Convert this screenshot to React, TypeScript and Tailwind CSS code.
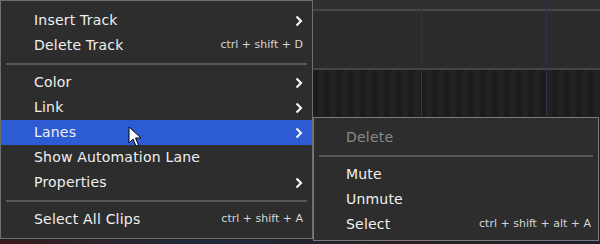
import React from "react";

type Item =
  | { kind: "item"; label: string; shortcut?: string; sub?: boolean; active?: boolean; disabled?: boolean }
  | { kind: "sep" };

const MAIN: Item[] = [
  { kind: "item", label: "Insert Track", sub: true },
  { kind: "item", label: "Delete Track", shortcut: "ctrl + shift + D" },
  { kind: "sep" },
  { kind: "item", label: "Color", sub: true },
  { kind: "item", label: "Link", sub: true },
  { kind: "item", label: "Lanes", sub: true, active: true },
  { kind: "item", label: "Show Automation Lane" },
  { kind: "item", label: "Properties", sub: true },
  { kind: "sep" },
  { kind: "item", label: "Select All Clips", shortcut: "ctrl + shift + A" },
];

const LANES: Item[] = [
  { kind: "item", label: "Delete", disabled: true },
  { kind: "sep" },
  { kind: "item", label: "Mute" },
  { kind: "item", label: "Unmute" },
  { kind: "item", label: "Select", shortcut: "ctrl + shift + alt + A" },
];

function Chevron() {
  return (
    <svg width="8" height="12" viewBox="0 0 8 12" className="shrink-0">
      <path d="M1.5 1.5 L6 6 L1.5 10.5" fill="none" stroke="#f4f4f4" strokeWidth="2.2" />
    </svg>
  );
}

function Cursor() {
  return (
    <svg width="14" height="22" viewBox="0 0 14 22" className="absolute left-[128px] top-[126px]">
      <path d="M1 1 L1 17 L5 13 L8 20 L10.5 19 L7.5 12 L13 12 Z" fill="#fff" stroke="#000" strokeWidth="1" />
    </svg>
  );
}

function MenuRows({ items, pad }: { items: Item[]; pad: string }) {
  return (
    <>
      {items.map((it, i) =>
        it.kind === "sep" ? (
          <div key={i} className="px-[5px] py-[5px]">
            <div className="h-[2px] bg-[#585858]" />
          </div>
        ) : (
          <div
            key={i}
            className={`flex h-[25px] items-center justify-between ${pad} ${
              it.active ? "bg-[#2c5bd3]" : ""
            } ${it.disabled ? "text-[#8a8a8a]" : "text-[#f0f0f0]"}`}
          >
            <span className="text-[14px] tracking-[0.2px]">{it.label}</span>
            {it.shortcut && <span className="text-[11px] text-[#d6d6d6]">{it.shortcut}</span>}
            {it.sub && <Chevron />}
          </div>
        )
      )}
    </>
  );
}

export default function App() {
  return (
    <div
      className="relative h-[244px] w-[600px] overflow-hidden bg-[#1e1e1e]"
      style={{ fontFamily: '"DejaVu Sans", Verdana, sans-serif' }}
    >
      {/* track canvas behind the menus */}
      <div className="flex h-full flex-col">
        <div className="h-[9px] bg-[#2f2f2f]" />
        <div className="h-[2px] bg-[#474747]" />
        <div className="h-[57px] bg-[#2b2b2b]" />
        <div className="h-[2px] bg-[#444444]" />
        <div className="h-[47px] bg-[repeating-linear-gradient(90deg,#1c1c1c_0px,#1c1c1c_6px,#222222_6px,#222222_12px)]" />
        <div className="flex-1 bg-[#222]" />
        <div className="h-[4px] bg-[linear-gradient(90deg,#3a1c1c,#1c2a3a,#2a1f25,#1a1f2a)]" />
      </div>
      <div className="absolute left-[421px] top-0 h-[117px] w-px bg-[#2a3644]" />
      <div className="absolute left-[546px] top-0 h-[117px] w-px bg-[#2a3644]" />

      {/* main context menu */}
      <div className="absolute left-0 top-0 w-[313px] border border-[#6e6e6e] bg-[#2d2d2d] pt-[7px] pb-[6px]">
        <MenuRows items={MAIN} pad="pl-[33px] pr-[9px]" />
      </div>

      {/* Lanes submenu */}
      <div className="absolute left-[313px] top-[117px] w-[286px] border border-[#7a7a7a] bg-[#2d2d2d] pt-[7px] pb-[3px]">
        <MenuRows items={LANES} pad="pl-[32px] pr-[7px]" />
      </div>

      <Cursor />
    </div>
  );
}
